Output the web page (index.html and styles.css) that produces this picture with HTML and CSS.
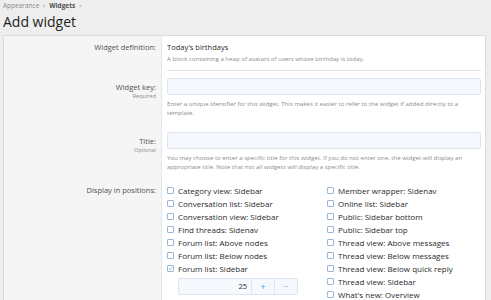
FILE: index.html
```html
<!DOCTYPE html>
<html>
<head>
<meta charset="utf-8">
<link rel="stylesheet" href="styles.css">
</head>
<body>
<div class="crumbs"><span>Appearance</span><span class="sep">›</span><b>Widgets</b><span class="sep">›</span></div>
<h1 class="title">Add widget</h1>
<div class="block">
  <div class="row row-def">
    <div class="lbl"><div class="lt">Widget definition:</div></div>
    <div class="ctl sep-line">
      <div class="val">Today's birthdays</div>
      <div class="desc">A block containing a heap of avatars of users whose birthday is today.</div>
    </div>
  </div>
  <div class="row row-in">
    <div class="lbl"><div class="lt">Widget key:</div><div class="sub">Required</div></div>
    <div class="ctl">
      <div class="input"></div>
      <div class="desc">Enter a unique identifier for this widget. This makes it easier to refer to the widget if added directly to a template.</div>
    </div>
  </div>
  <div class="row row-in">
    <div class="lbl"><div class="lt">Title:</div><div class="sub">Optional</div></div>
    <div class="ctl">
      <div class="input"></div>
      <div class="desc">You may choose to enter a specific title for this widget. If you do not enter one, the widget will display an appropriate title. Note that not all widgets will display a specific title.</div>
    </div>
  </div>
  <div class="row row-pos">
    <div class="lbl"><div class="lt">Display in positions:</div></div>
    <div class="ctl cols">
      <div class="col">
        <div class="cb"><span class="box"></span>Category view: Sidebar</div>
        <div class="cb"><span class="box"></span>Conversation list: Sidebar</div>
        <div class="cb"><span class="box"></span>Conversation view: Sidebar</div>
        <div class="cb"><span class="box"></span>Find threads: Sidenav</div>
        <div class="cb"><span class="box"></span>Forum list: Above nodes</div>
        <div class="cb"><span class="box"></span>Forum list: Below nodes</div>
        <div class="cb"><span class="box checked"><svg width="7" height="7" viewBox="0 0 7 7"><path d="M1.3 3.6 L2.9 5.1 L5.8 1.8" fill="none" stroke="#6f97c4" stroke-width="1"/></svg></span>Forum list: Sidebar</div>
        <div class="num">
          <div class="num-val">25</div>
          <div class="num-btn plus">+</div>
          <div class="num-btn minus">−</div>
        </div>
      </div>
      <div class="col">
        <div class="cb"><span class="box"></span>Member wrapper: Sidenav</div>
        <div class="cb"><span class="box"></span>Online list: Sidebar</div>
        <div class="cb"><span class="box"></span>Public: Sidebar bottom</div>
        <div class="cb"><span class="box"></span>Public: Sidebar top</div>
        <div class="cb"><span class="box"></span>Thread view: Above messages</div>
        <div class="cb"><span class="box"></span>Thread view: Below messages</div>
        <div class="cb"><span class="box"></span>Thread view: Below quick reply</div>
        <div class="cb"><span class="box"></span>Thread view: Sidebar</div>
        <div class="cb"><span class="box"></span>What's new: Overview</div>
      </div>
    </div>
  </div>
</div>
</body>
</html>
```
FILE: styles.css
```css
html, body {
  margin: 0;
  padding: 0;
}
body {
  background: #eeeeee;
  font-family: "Open Sans", "Noto Sans", sans-serif;
  color: #2b2b2b;
  width: 491px;
  height: 300px;
  overflow: hidden;
}
.crumbs {
  padding: 1px 0 0 3px;
  height: 10px;
  font-size: 6.5px;
  line-height: 10px;
  color: #8c8c8c;
}
.crumbs b {
  color: #505050;
  font-weight: 700;
}
.crumbs .sep {
  margin: 0 4px;
}
.title {
  margin: 0;
  padding: 0 0 0 3px;
  font-size: 14px;
  font-weight: 400;
  line-height: 22px;
  height: 24px;
  color: #1e1e1e;
}
.block {
  margin-left: 3px;
  width: 481px;
  border: 1px solid #dcdcdc;
  background: #fff;
  border-radius: 2px;
}
.row {
  display: grid;
  grid-template-columns: 158px 1fr;
}
.lbl {
  background: #f5f5f5;
  border-right: 1px solid #e6e6e6;
  text-align: right;
  padding-right: 5px;
  color: #505050;
}
.lt {
  font-size: 7.5px;
  line-height: 12px;
}
.sub {
  font-size: 5.5px;
  line-height: 7px;
  color: #8c8c8c;
}
.ctl {
  margin: 0 4px 0 5px;
}
.val {
  font-size: 7.5px;
  line-height: 12px;
  color: #2b2b2b;
}
.desc {
  font-size: 6.1px;
  line-height: 9px;
  color: #8c8c8c;
  margin-top: 4px;
}
.row-def .lbl, .row-def .ctl {
  padding-top: 5px;
}
.row-def .desc {
  margin-top: 1px;
}
.sep-line {
  padding-bottom: 7px;
  border-bottom: 1px solid #e4e4e4;
}
.row-in .ctl {
  padding: 7px 0 8px;
}
.row-in .lbl {
  padding-top: 10px;
}
.input {
  height: 15px;
  border: 1px solid #dde5ee;
  background: #f5f9fd;
  border-radius: 2px;
}
.row-pos .lbl {
  padding-top: 5px;
}
.row-pos .ctl {
  padding-top: 5px;
  padding-bottom: 10px;
}
.cols {
  display: grid;
  grid-template-columns: 160px 1fr;
}
.cb {
  display: flex;
  align-items: center;
  font-size: 8px;
  line-height: 13px;
  height: 13px;
  color: #2b2b2b;
}
.box {
  box-sizing: border-box;
  width: 7px;
  height: 7px;
  border: 1px solid #9cb7d6;
  background: #fff;
  margin-right: 4px;
  display: inline-flex;
  align-items: center;
  justify-content: center;
  border-radius: 1px;
}
.box svg {
  display: block;
}
.num {
  margin: 3px 0 0 11px;
  width: 120px;
  height: 17px;
  box-sizing: border-box;
  border: 1px solid #dde5ee;
  background: #f5f9fd;
  border-radius: 2px;
  display: flex;
}
.num-val {
  flex: 1;
  text-align: right;
  padding-right: 4px;
  font-size: 7.5px;
  line-height: 15px;
  color: #2b2b2b;
}
.num-btn {
  width: 22px;
  border-left: 1px solid #dde5ee;
  text-align: center;
  font-size: 9px;
  line-height: 15px;
}
.plus {
  color: #4a9be0;
}
.minus {
  color: #8fb0d2;
}
```
